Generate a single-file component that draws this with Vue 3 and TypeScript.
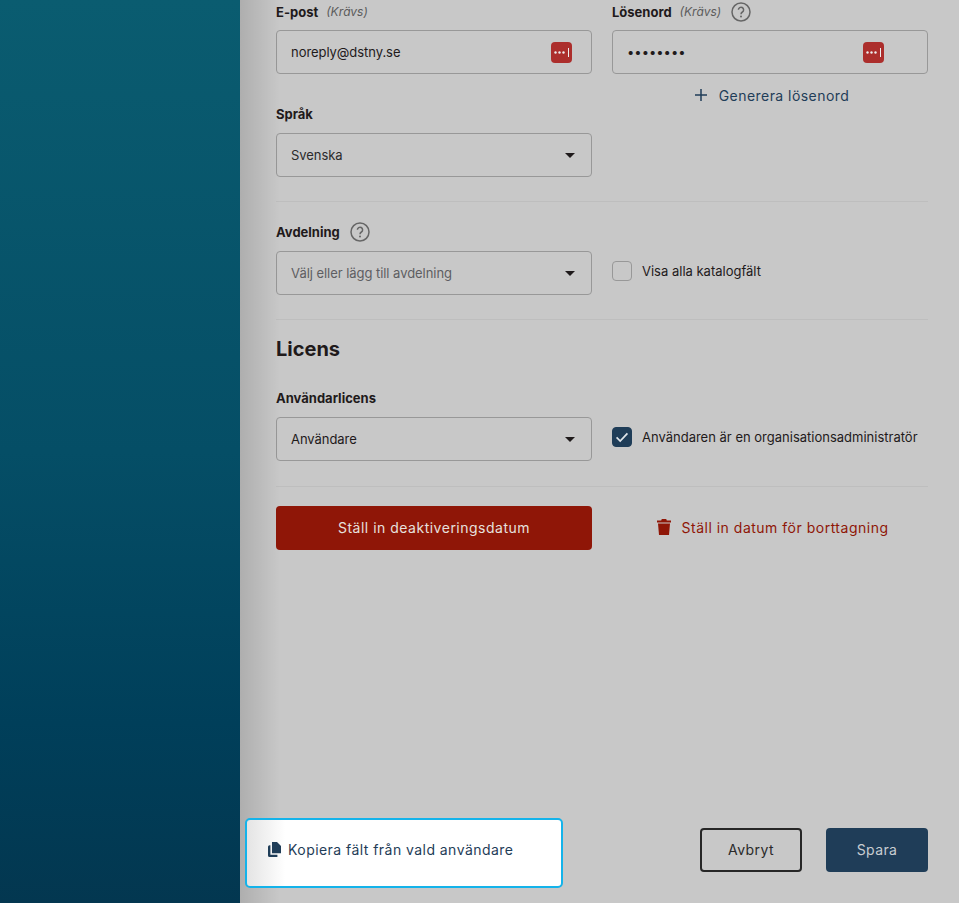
<script setup lang="ts">
const dots = '••••••••'
</script>

<template>
  <div class="page">
    <aside class="sidebar"></aside>
    <main class="main">
      <form class="form" @submit.prevent>
        <div class="grid top-grid">
          <div class="field">
            <div class="label-row"><label>E-post</label><em>(Krävs)</em></div>
            <div class="control">
              <span class="value">noreply@dstny.se</span>
              <svg class="lp" viewBox="0 0 21 21"><rect width="21" height="21" rx="4" fill="#ac2e2c"/><circle cx="4.5" cy="10.5" r="1.2" fill="#eee"/><circle cx="8.5" cy="10.5" r="1.2" fill="#eee"/><circle cx="12.5" cy="10.5" r="1.2" fill="#eee"/><rect x="17" y="6" width="1" height="9" fill="#eee"/></svg>
            </div>
          </div>
          <div class="field">
            <div class="label-row"><label>Lösenord</label><em>(Krävs)</em>
              <svg class="help" viewBox="0 0 20 20"><circle cx="10" cy="10" r="9" fill="none" stroke="#666" stroke-width="1.5"/><path d="M7.4 7.8a2.6 2.6 0 1 1 4 2.2c-.9.6-1.4 1.1-1.4 2.2" fill="none" stroke="#666" stroke-width="1.5"/><circle cx="10" cy="14.6" r="1" fill="#666"/></svg>
            </div>
            <div class="control pw">
              <span class="value dots">{{ dots }}</span>
              <svg class="lp" viewBox="0 0 21 21"><rect width="21" height="21" rx="4" fill="#ac2e2c"/><circle cx="4.5" cy="10.5" r="1.2" fill="#eee"/><circle cx="8.5" cy="10.5" r="1.2" fill="#eee"/><circle cx="12.5" cy="10.5" r="1.2" fill="#eee"/><rect x="17" y="6" width="1" height="9" fill="#eee"/></svg>
            </div>
            <button type="button" class="generate">
              <svg viewBox="0 0 12 12"><path d="M6 0v12M0 6h12" stroke="#1f3d58" stroke-width="1.5" fill="none"/></svg>
              <span>Generera lösenord</span>
            </button>
          </div>
        </div>

        <div class="field lang">
          <div class="label-row tight"><label>Språk</label></div>
          <div class="grid">
            <div class="control sel"><span class="value muted-dark">Svenska</span><i class="caret"></i></div>
          </div>
        </div>

        <hr class="div d1" />

        <div class="field dept">
          <div class="label-row tight"><label>Avdelning</label>
            <svg class="help" viewBox="0 0 20 20"><circle cx="10" cy="10" r="9" fill="none" stroke="#666" stroke-width="1.5"/><path d="M7.4 7.8a2.6 2.6 0 1 1 4 2.2c-.9.6-1.4 1.1-1.4 2.2" fill="none" stroke="#666" stroke-width="1.5"/><circle cx="10" cy="14.6" r="1" fill="#666"/></svg>
          </div>
          <div class="grid">
            <div class="control sel"><span class="value placeholder">Välj eller lägg till avdelning</span><i class="caret"></i></div>
            <label class="check"><span class="box"></span><span>Visa alla katalogfält</span></label>
          </div>
        </div>

        <hr class="div d2" />

        <h2>Licens</h2>

        <div class="field lic">
          <div class="label-row tight"><label>Användarlicens</label></div>
          <div class="grid">
            <div class="control sel"><span class="value">Användare</span><i class="caret"></i></div>
            <label class="check"><span class="box on"><svg viewBox="0 0 20 20"><path d="M4 10.5l4 4 8-8.6" fill="none" stroke="#dfe5ea" stroke-width="1.9"/></svg></span><span>Användaren är en organisationsadministratör</span></label>
          </div>
        </div>

        <hr class="div d3" />

        <div class="grid">
          <button type="button" class="btn-danger">Ställ in deaktiveringsdatum</button>
          <button type="button" class="btn-link">
            <svg viewBox="0 0 14 16"><path d="M4.8 0h4.4l.6 1.4H14v2H0v-2h4.2zM1 4.6h12l-1 11.4H2z" fill="#8f1607"/></svg>
            <span>Ställ in datum för borttagning</span>
          </button>
        </div>
      </form>

      <footer class="footer">
        <button type="button" class="copy">
          <svg viewBox="0 0 14 15"><path d="M5 0h5l4 4v7.2H5z" fill="#1f3d58"/><path d="M3.4 3.2v9.6h7V15H2.6A1.6 1.6 0 0 1 1 13.4V4.8a1.6 1.6 0 0 1 1.6-1.6z" fill="#1f3d58"/></svg>
          <span>Kopiera fält från vald användare</span>
        </button>
        <div class="actions">
          <button type="button" class="btn-outline">Avbryt</button>
          <button type="button" class="btn-primary">Spara</button>
        </div>
      </footer>
    </main>
  </div>
</template>

<style>
html, body { margin: 0; background: #c8c8c8; }
</style>

<style scoped>
.page { display: flex; width: 959px; height: 903px; overflow: hidden; font-family: Inter, "Liberation Sans", sans-serif; color: #1f1a1b; }
.sidebar { width: 240px; flex: none; background: linear-gradient(180deg, #0a5c70 0%, #054e66 50%, #003f5a 80%, #033750 100%); }
.main { flex: 1; display: flex; flex-direction: column; background: #c8c8c8; position: relative; }
.main::before { content: ""; position: absolute; left: 0; top: 0; bottom: 0; width: 40px; background: linear-gradient(90deg, rgba(0,0,0,.13), rgba(0,0,0,0)); pointer-events: none; }
.form { flex: 1; padding: 3px 31px 0 36px; min-height: 0; }
.grid { display: grid; grid-template-columns: 316px 316px; column-gap: 20px; align-items: start; }
.label-row { display: flex; align-items: center; height: 17px; font-size: 13px; margin-bottom: 10px; }
.label-row.tight { margin-bottom: 11px; }
.label-row label { font-weight: 700; }
.label-row em { margin-left: 8px; font-size: 12px; color: #5b5b5b; }
.help { width: 20px; height: 20px; margin-left: 10px; flex: none; }
.control { height: 44px; box-sizing: border-box; border: 1px solid #989898; border-radius: 4px; display: flex; align-items: center; justify-content: space-between; padding: 0 19px 0 14px; }
.control.pw { padding-right: 43px; }
.control.sel { padding-right: 16px; }
.value { font-size: 13px; letter-spacing: -.05px; }
.dots { font-size: 13px; letter-spacing: 0; }
.placeholder { color: #5e5e62; }
.muted-dark { color: #2b2b2b; }
.lp { width: 21px; height: 21px; }
.caret { width: 0; height: 0; border-left: 5px solid transparent; border-right: 5px solid transparent; border-top: 5px solid #1f1a1b; }
.generate { display: flex; justify-content: center; align-items: center; gap: 12px; width: 100%; height: 22px; margin-top: 10px; padding: 0 0 0 4px; background: none; border: 0; font: inherit; font-size: 14px; letter-spacing: .45px; color: #1f3d58; }
.generate svg { width: 12px; height: 12px; }
.lang { margin-top: -1px; }
.div { border: 0; border-top: 1px solid #bebebe; margin: 0; }
.d1 { margin-top: 24px; }
.dept { margin-top: 21px; }
.d2 { margin-top: 24px; }
.check { display: flex; align-items: center; gap: 10px; height: 40px; font-size: 13px; }
.box { width: 20px; height: 20px; box-sizing: border-box; border: 1px solid #989898; border-radius: 4px; flex: none; display: flex; }
.box.on { background: #1f3d58; border-color: #1f3d58; }
.box svg { width: 100%; height: 100%; }
h2 { margin: 17px 0 0; font-size: 20px; line-height: 24px; font-weight: 700; }
.lic { margin-top: 28px; }
.d3 { margin-top: 25px; }
.d3 + .grid { margin-top: 19px; align-items: center; }
.btn-danger { height: 44px; padding: 0 0 2px; background: #8f1607; color: #e6e0de; border: 0; border-radius: 4px; font: inherit; font-size: 14px; letter-spacing: .5px; }
.btn-link { display: flex; align-items: center; justify-content: center; gap: 11px; height: 44px; padding: 0 0 2px 5px; background: none; border: 0; font: inherit; font-size: 14px; letter-spacing: .5px; color: #8f1607; }
.btn-link svg { width: 14px; height: 16px; }
.footer { display: flex; align-items: center; justify-content: space-between; padding: 0 31px 15px 5px; }
.copy { position: relative; display: flex; align-items: center; gap: 7px; width: 318px; height: 70px; box-sizing: border-box; padding: 0 0 8px 20px; border: 2px solid #14b3ea; border-radius: 5px; background: linear-gradient(90deg, #e4e4e4 0, #fff 38px); font: inherit; font-size: 14px; letter-spacing: .45px; color: #1f3d58; text-align: left; }
.copy svg { width: 14px; height: 15px; flex: none; }
.actions { display: flex; gap: 24px; margin-bottom: 6px; }
.btn-outline, .btn-primary { height: 44px; width: 102px; box-sizing: border-box; border-radius: 4px; font: inherit; font-size: 14px; letter-spacing: .4px; padding: 0 0 2px; }
.btn-outline { background: none; border: 2px solid #262626; color: #2a2a2a; }
.btn-primary { background: #1f3d58; border: 0; color: #c8cdd2; }
</style>
